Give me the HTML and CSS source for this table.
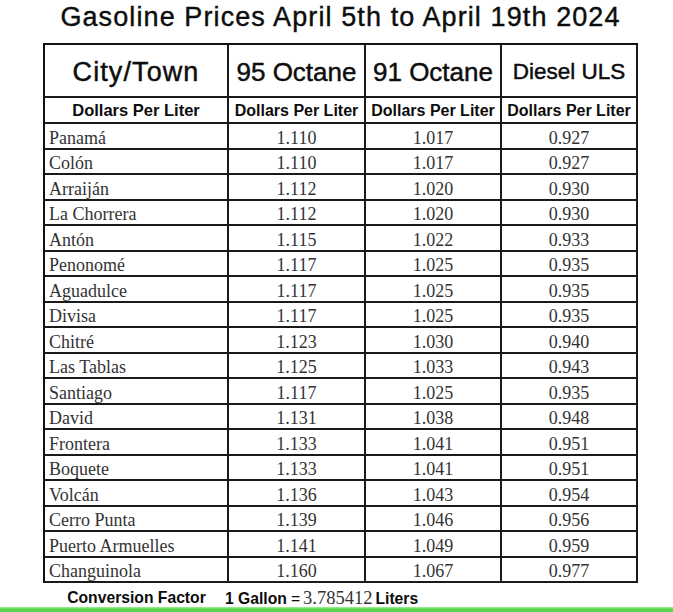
FILE: index.html
```html
<!DOCTYPE html>
<html lang="en">
<head>
<meta charset="utf-8">
<title>Gasoline Prices April 5th to April 19th 2024</title>
<link rel="stylesheet" href="styles.css">
</head>
<body>
<div class="page">
  <h1 class="title">Gasoline Prices April 5th to April 19th 2024</h1>
  <div class="grid" role="table">
    <div class="cell head head-city">City/Town</div>
    <div class="cell head">95 Octane</div>
    <div class="cell head">91 Octane</div>
    <div class="cell head head-sm">Diesel ULS</div>

    <div class="cell unit unit-city">Dollars Per Liter</div>
    <div class="cell unit">Dollars Per Liter</div>
    <div class="cell unit">Dollars Per Liter</div>
    <div class="cell unit">Dollars Per Liter</div>

    <div class="cell city">Panamá</div><div class="cell num">1.110</div><div class="cell num">1.017</div><div class="cell num">0.927</div>
    <div class="cell city">Colón</div><div class="cell num">1.110</div><div class="cell num">1.017</div><div class="cell num">0.927</div>
    <div class="cell city">Arraiján</div><div class="cell num">1.112</div><div class="cell num">1.020</div><div class="cell num">0.930</div>
    <div class="cell city">La Chorrera</div><div class="cell num">1.112</div><div class="cell num">1.020</div><div class="cell num">0.930</div>
    <div class="cell city">Antón</div><div class="cell num">1.115</div><div class="cell num">1.022</div><div class="cell num">0.933</div>
    <div class="cell city">Penonomé</div><div class="cell num">1.117</div><div class="cell num">1.025</div><div class="cell num">0.935</div>
    <div class="cell city">Aguadulce</div><div class="cell num">1.117</div><div class="cell num">1.025</div><div class="cell num">0.935</div>
    <div class="cell city">Divisa</div><div class="cell num">1.117</div><div class="cell num">1.025</div><div class="cell num">0.935</div>
    <div class="cell city">Chitré</div><div class="cell num">1.123</div><div class="cell num">1.030</div><div class="cell num">0.940</div>
    <div class="cell city">Las Tablas</div><div class="cell num">1.125</div><div class="cell num">1.033</div><div class="cell num">0.943</div>
    <div class="cell city">Santiago</div><div class="cell num">1.117</div><div class="cell num">1.025</div><div class="cell num">0.935</div>
    <div class="cell city">David</div><div class="cell num">1.131</div><div class="cell num">1.038</div><div class="cell num">0.948</div>
    <div class="cell city">Frontera</div><div class="cell num">1.133</div><div class="cell num">1.041</div><div class="cell num">0.951</div>
    <div class="cell city">Boquete</div><div class="cell num">1.133</div><div class="cell num">1.041</div><div class="cell num">0.951</div>
    <div class="cell city">Volcán</div><div class="cell num">1.136</div><div class="cell num">1.043</div><div class="cell num">0.954</div>
    <div class="cell city">Cerro Punta</div><div class="cell num">1.139</div><div class="cell num">1.046</div><div class="cell num">0.956</div>
    <div class="cell city">Puerto Armuelles</div><div class="cell num">1.141</div><div class="cell num">1.049</div><div class="cell num">0.959</div>
    <div class="cell city">Changuinola</div><div class="cell num">1.160</div><div class="cell num">1.067</div><div class="cell num">0.977</div>
  </div>
  <div class="footer">
    <span class="factor-label">Conversion Factor</span>
    <span class="factor-value">1 Gallon<span class="eq">=</span><span class="serif">3.785412</span>Liters</span>
  </div>
</div>
<div class="green-line"></div>
</body>
</html>
```

FILE: styles.css
```css
html, body {
  margin: 0;
  padding: 0;
  background: #ffffff;
}

body {
  width: 673px;
  height: 612px;
  overflow: hidden;
  position: relative;
  font-family: "Liberation Sans", Arial, sans-serif;
  color: #111111;
}

.page {
  width: 595px;
  margin-left: 43px;
  display: flex;
  flex-direction: column;
}

.title {
  margin: 0;
  height: 43px;
  line-height: 35px;
  font-size: 27px;
  font-weight: 400;
  letter-spacing: 1.1px;
  -webkit-text-stroke: 0.4px #0d0d0d;
  text-align: center;
  color: #0d0d0d;
  white-space: nowrap;
}

.grid {
  display: grid;
  grid-template-columns: 184px 137px 136px 136px;
  grid-template-rows: 53px 26px repeat(18, 25.5px);
  border-left: 2px solid #111111;
  border-top: 2px solid #111111;
}

.cell {
  box-sizing: border-box;
  border-right: 2px solid #1a1a1a;
  border-bottom: 2px solid #1a1a1a;
  display: flex;
  align-items: center;
  white-space: nowrap;
  overflow: hidden;
}

.head {
  justify-content: center;
  font-size: 26px;
  font-weight: 400;
  -webkit-text-stroke: 0.45px #0d0d0d;
  color: #0d0d0d;
  padding-top: 3px;
}

.head-city {
  font-size: 27px;
  letter-spacing: 1.1px;
}

.head-sm {
  font-size: 22.5px;
}

.unit {
  justify-content: center;
  font-size: 16px;
  font-weight: 700;
  color: #0d0d0d;
  padding-top: 1px;
}

.unit-city {
  font-size: 16.5px;
}

.city {
  font-family: "Liberation Serif", "Times New Roman", serif;
  font-size: 18px;
  color: #333333;
  padding-left: 4px;
  padding-top: 5px;
}

.num {
  justify-content: center;
  font-family: "Liberation Serif", "Times New Roman", serif;
  font-size: 18px;
  color: #333333;
  padding-top: 5px;
}

.footer {
  display: flex;
  align-items: center;
  height: 26px;
  padding-top: 2px;
  font-size: 15.7px;
  font-weight: 700;
  color: #0d0d0d;
}

.factor-label {
  box-sizing: border-box;
  width: 182px;
  padding-left: 5px;
  text-align: center;
}

.factor-value {
  display: flex;
  align-items: baseline;
}

.eq {
  font-weight: 400;
  margin: 0 3px 0 4px;
}

.serif {
  font-family: "Liberation Serif", "Times New Roman", serif;
  font-weight: 400;
  font-size: 18.5px;
  color: #333333;
  margin-right: 3px;
}

.green-line {
  position: absolute;
  left: 0;
  right: 0;
  top: 607px;
  height: 5px;
  background: linear-gradient(#a8eea0, #5ad64a 40%, #5ad64a);
}
```
